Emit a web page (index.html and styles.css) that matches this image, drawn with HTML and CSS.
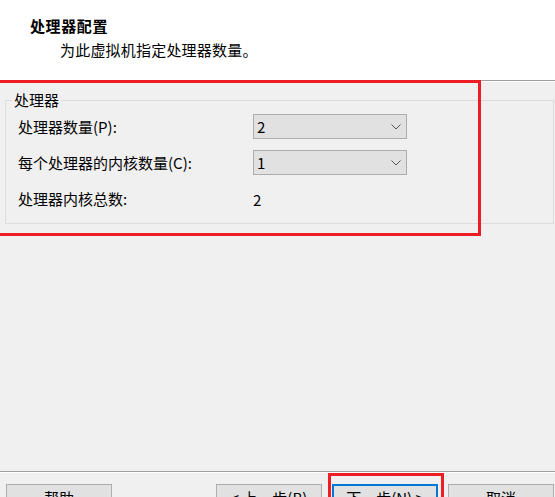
FILE: index.html
```html
<!DOCTYPE html>
<html lang="zh-CN">
<head>
<meta charset="utf-8">
<title>处理器配置</title>
<link rel="stylesheet" href="styles.css">
</head>
<body>
  <header class="header">
    <div class="title">处理器配置</div>
    <div class="subtitle">为此虚拟机指定处理器数量。</div>
  </header>
  <main class="main">
    <fieldset class="group">
      <legend class="legend">处理器</legend>
      <div class="rows">
        <div class="label">处理器数量(P):</div>
        <div class="combo"><span>2</span><svg class="chev" width="10" height="6" viewBox="0 0 10 6"><path d="M0.5 0.5 L5 5 L9.5 0.5" fill="none" stroke="#555" stroke-width="1"/></svg></div>
        <div class="label">每个处理器的内核数量(C):</div>
        <div class="combo"><span>1</span><svg class="chev" width="10" height="6" viewBox="0 0 10 6"><path d="M0.5 0.5 L5 5 L9.5 0.5" fill="none" stroke="#555" stroke-width="1"/></svg></div>
        <div class="label">处理器内核总数:</div>
        <div class="value">2</div>
      </div>
    </fieldset>
  </main>
  <footer class="footer">
    <button class="btn">帮助</button>
    <div class="nav">
      <button class="btn">&lt; 上一步(B)</button>
      <button class="btn primary">下一步(N) &gt;</button>
      <button class="btn">取消</button>
    </div>
    <div class="mark mark-next"></div>
  </footer>
  <div class="mark mark-group"></div>
</body>
</html>
```

FILE: styles.css
```css
html, body {
  margin: 0;
  padding: 0;
}
body {
  position: relative;
  width: 555px;
  height: 497px;
  overflow: hidden;
  background: #f0f0f0;
  font-family: "Noto Sans CJK SC", "Microsoft YaHei", sans-serif;
  font-size: 15px;
  color: #000;
  display: flex;
  flex-direction: column;
}
.header {
  height: 81px;
  box-sizing: border-box;
  background: #fff;
  padding: 16px 0 0 30px;
  border-bottom: 1px solid #a0a0a0;
}
.title {
  font-weight: bold;
  line-height: 20px;
  letter-spacing: 0.6px;
}
.subtitle {
  margin: 4px 0 0 30px;
  line-height: 20px;
  letter-spacing: 0.2px;
}
.main {
  flex: 1;
  border-top: 1px solid #fff;
  padding: 8px 1px 0 5px;
}
.group {
  margin: 0;
  min-width: 0;
  border: 1px solid #dcdcdc;
  padding: 4px 12px 12px 12px;
}
.legend {
  margin-left: -6px;
  padding: 0 2px;
  line-height: 20px;
}
.rows {
  display: grid;
  grid-template-columns: 235px 154px;
  grid-auto-rows: 25px;
  row-gap: 11px;
  align-items: center;
}
.label {
  line-height: 25px;
}
.combo {
  height: 25px;
  box-sizing: border-box;
  border: 1px solid #adadad;
  background: #e1e1e1;
  display: flex;
  align-items: center;
  justify-content: space-between;
  padding: 0 5px 0 3px;
  line-height: 23px;
}
.chev {
  display: block;
}
.value {
  line-height: 25px;
  margin-top: 2px;
}
.footer {
  position: relative;
  height: 26px;
  box-sizing: border-box;
  border-top: 1px solid #a0a0a0;
  box-shadow: inset 0 1px 0 #fff;
  padding: 12px 1px 0 6px;
  display: flex;
  align-items: flex-start;
  justify-content: space-between;
}
.nav {
  display: flex;
  gap: 10px;
}
.btn {
  width: 106px;
  height: 28px;
  flex: none;
  box-sizing: border-box;
  border: 1px solid #adadad;
  background: #e1e1e1;
  font-family: inherit;
  font-size: 15px;
  line-height: 24px;
  padding: 0;
  color: #000;
}
.btn.primary {
  border: 2px solid #0078d7;
}
.mark {
  position: absolute;
  border: 3px solid #ee1c25;
  box-sizing: border-box;
}
.mark-group {
  left: -3px;
  top: 80px;
  width: 484px;
  height: 156px;
}
.mark-next {
  left: 328px;
  top: 1px;
  width: 116px;
  height: 40px;
}
```
